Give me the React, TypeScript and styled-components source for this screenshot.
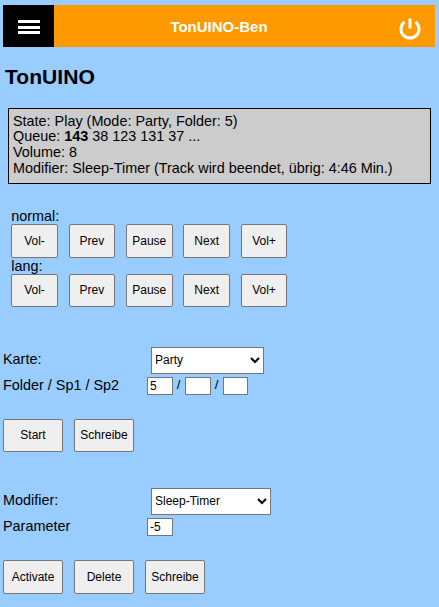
import React from 'react';
import styled, {createGlobalStyle} from 'styled-components';

const GlobalStyle = createGlobalStyle`
    html, body {
        margin: 0;
        background-color: #99ccff;
        font-family: "Liberation Sans", Arial, sans-serif;
        color: #000000;
    }
`;

const Page = styled.div`
    width: 439px;
    height: 607px;
    overflow: hidden;
    padding: 5px 4px 0 3px;
    box-sizing: border-box;
`;

const Header = styled.header`
    height: 42px;
    display: flex;
    align-items: center;
    background-color: #ff9900;
    color: #ffffff;
`;

const MenuButton = styled.div`
    width: 51px;
    height: 42px;
    box-sizing: border-box;
    padding-top: 2px;
    background-color: #000000;
    display: flex;
    flex-direction: column;
    align-items: center;
    justify-content: center;
    gap: 2.5px;
    span {
        width: 22px;
        height: 3px;
        background-color: #ffffff;
    }
`;

const HeaderTitle = styled.div`
    flex: 1;
    text-align: center;
    font-size: 15px;
    font-weight: bold;
`;

const PowerButton = styled.div`
    width: 51px;
    height: 42px;
    box-sizing: border-box;
    padding: 5px 0 0 1px;
    display: flex;
    align-items: center;
    justify-content: center;
`;

const Title = styled.h1`
    margin: 17px 0 0 2px;
    font-size: 21.1px;
    line-height: 25px;
    font-weight: bold;
`;

const StatusBox = styled.div`
    margin: 19px 4px 0 5px;
    height: 76px;
    box-sizing: border-box;
    padding: 4.5px 4px 4px;
    border: 1px solid #000000;
    background-color: #cccccc;
    font-size: 14.4px;
    line-height: 15.75px;
    white-space: nowrap;
`;

const Controls = styled.section`
    margin: 24px 0 0 8.2px;
`;

const RowLabel = styled.div`
    font-size: 14.4px;
    line-height: 16px;
    height: 16px;
`;

const KeyGrid = styled.div`
    display: flex;
    gap: 10.8px;
`;

const ActionRow = styled.div<{$top: number}>`
    display: flex;
    gap: 11px;
    margin-top: ${p => p.$top}px;
`;

const ActionButton = styled.button<{$width: number}>`
    width: ${p => p.$width}px;
    height: 33.6px;
    padding: 0;
    box-sizing: border-box;
    background-color: #efefef;
    border: 1px solid #767676;
    border-radius: 2px;
    font-family: "Liberation Sans", Arial, sans-serif;
    font-size: 12px;
    color: #000000;
`;

const FormRow = styled.div<{$top: number; $height: number}>`
    display: flex;
    align-items: center;
    height: ${p => p.$height}px;
    margin-top: ${p => p.$top}px;
    font-size: 14.4px;
`;

const FormLabel = styled.label`
    width: 144px;
    flex: none;
    padding-bottom: 2px;
`;

const Select = styled.select<{$width: number}>`
    width: ${p => p.$width}px;
    height: 27px;
    margin-left: 4px;
    box-sizing: border-box;
    background-color: #ffffff;
    border: 1px solid #767676;
    font-family: "Liberation Sans", Arial, sans-serif;
    font-size: 12px;
    color: #000000;
    padding: 0;
    text-indent: -1px;
`;

const SmallInput = styled.input<{$width?: number}>`
    width: ${p => p.$width ?? 26}px;
    height: 18px;
    box-sizing: border-box;
    padding: 1px 2px;
    background-color: #ffffff;
    border: 1px solid #767676;
    font-family: "Liberation Sans", Arial, sans-serif;
    font-size: 12px;
    color: #000000;
`;

const Slash = styled.span`
    width: 12px;
    box-sizing: border-box;
    padding: 0 1px 2px 0;
    text-align: center;
    font-size: 13.3px;
`;

const keys = ['Vol-', 'Prev', 'Pause', 'Next', 'Vol+'];

const KeyRow: React.FunctionComponent = () => (
    <KeyGrid>
        {keys.map(k => (
            <ActionButton key={k} $width={46.6}>{k}</ActionButton>
        ))}
    </KeyGrid>
);

const App: React.FunctionComponent = () => {
    return (
        <Page>
            <GlobalStyle/>
            <Header>
                <MenuButton><span/><span/><span/></MenuButton>
                <HeaderTitle>TonUINO-Ben</HeaderTitle>
                <PowerButton>
                    <svg width="24" height="24" viewBox="0 0 24 24" fill="none" stroke="#ffffff" strokeWidth="3">
                        <path d="M6.5 4.9a9 9 0 1 0 11 0"/>
                        <path d="M12 1.5v10"/>
                    </svg>
                </PowerButton>
            </Header>
            <Title>TonUINO</Title>
            <StatusBox>
                State: Play (Mode: Party, Folder: 5)<br/>
                Queue: <b>143</b> 38 123 131 37 ...<br/>
                Volume: 8<br/>
                Modifier: Sleep-Timer (Track wird beendet, übrig: 4:46 Min.)
            </StatusBox>
            <Controls>
                <RowLabel>normal:</RowLabel>
                <KeyRow/>
                <RowLabel>lang:</RowLabel>
                <KeyRow/>
            </Controls>
            <FormRow $top={39.8} $height={27}>
                <FormLabel>Karte:</FormLabel>
                <Select $width={113} defaultValue="Party">
                    <option>Party</option>
                </Select>
            </FormRow>
            <FormRow $top={3} $height={18}>
                <FormLabel>Folder / Sp1 / Sp2</FormLabel>
                <SmallInput defaultValue="5"/>
                <Slash>/</Slash>
                <SmallInput/>
                <Slash>/</Slash>
                <SmallInput $width={25}/>
            </FormRow>
            <ActionRow $top={23.6}>
                <ActionButton $width={60}>Start</ActionButton>
                <ActionButton $width={60}>Schreibe</ActionButton>
            </ActionRow>
            <FormRow $top={35.8} $height={27}>
                <FormLabel>Modifier:</FormLabel>
                <Select $width={120} defaultValue="Sleep-Timer">
                    <option>Sleep-Timer</option>
                </Select>
            </FormRow>
            <FormRow $top={3} $height={18}>
                <FormLabel>Parameter</FormLabel>
                <SmallInput defaultValue="-5"/>
            </FormRow>
            <ActionRow $top={24.4}>
                <ActionButton $width={60}>Activate</ActionButton>
                <ActionButton $width={60}>Delete</ActionButton>
                <ActionButton $width={60}>Schreibe</ActionButton>
            </ActionRow>
        </Page>
    );
};

export default App;
